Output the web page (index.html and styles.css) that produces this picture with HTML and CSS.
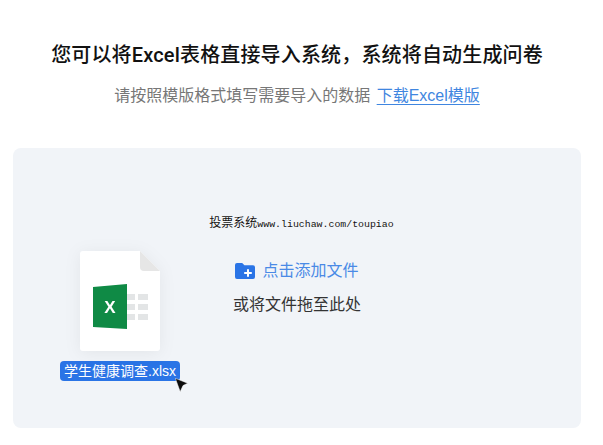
FILE: index.html
```html
<!DOCTYPE html>
<html lang="zh-CN">

<head>
    <meta charset="UTF-8" />
    <title>Excel导入</title>
    <link rel="stylesheet" href="styles.css">
</head>

<body>
    <div class="page">
        <h1 class="title">您可以将Excel表格直接导入系统，系统将自动生成问卷</h1>
        <p class="subtitle">请按照模版格式填写需要导入的数据 <a class="link" href="#">下载Excel模版</a></p>

        <div class="drop-panel">
            <div class="watermark">投票系统<span class="watermark-url">www.liuchaw.com/toupiao</span></div>
            <div class="add-file">
                <svg class="folder-icon" width="20" height="16" viewBox="0 0 20 16">
                    <path d="M2 0h5.2l2.2 2.2H18a2 2 0 0 1 2 2V14a2 2 0 0 1-2 2H2a2 2 0 0 1-2-2V2a2 2 0 0 1 2-2z" fill="#2a74e6" />
                    <path d="M13 6.2v7.6M9.2 10h7.6" stroke="#fff" stroke-width="2" />
                </svg>
                <span>点击添加文件</span>
            </div>
            <div class="drop-hint">或将文件拖至此处</div>

            <!-- file being dragged over the panel -->
            <div class="drag-file">
                <svg class="file-card" width="80" height="100" viewBox="0 0 80 100">
                    <path d="M3 0h57l20 20v77a3 3 0 0 1-3 3H3a3 3 0 0 1-3-3V3a3 3 0 0 1 3-3z" fill="#fff" />
                    <path d="M60 0l20 20H64a4 4 0 0 1-4-4z" fill="#e6e6e6" />
                    <path d="M13 36l34-3v45l-34-2z" fill="#0f8a45" />
                    <path d="M47 43h8v6h-8zM58 43h10v6H58zM47 53h8v6h-8zM58 53h10v6H58zM47 63h8v6h-8zM58 63h10v6H58z" fill="#e3e5e6" />
                    <text x="30" y="62" class="excel-x">X</text>
                </svg>
                <div class="file-name">学生健康调查.xlsx</div>
                <svg class="cursor" width="13" height="14" viewBox="0 0 13 14">
                    <path d="M0.3 0.3L12.7 5.2 8 7.6 5.2 13.7z" fill="#0c0c0c" stroke="#fff" stroke-width="0.5" />
                </svg>
            </div>
        </div>
    </div>
</body>

</html>
```

FILE: styles.css
```css
* {
    box-sizing: border-box;
    font-family: "Liberation Sans", "Noto Sans CJK SC", sans-serif;
}

body {
    margin: 0;
    background: #fff;
    color: #333;
}

.page {
    width: 594px;
    padding: 41px 13px 0;
}

.title {
    margin: 0;
    font-family: Roboto, "Noto Sans CJK SC", sans-serif;
    font-size: 20px;
    line-height: 28px;
    font-weight: 500;
    letter-spacing: 0.16px;
    text-align: center;
    color: #111;
}

.subtitle {
    margin: 14px 0 0;
    font-size: 16px;
    line-height: 26px;
    text-align: center;
    color: #777;
}

.link {
    margin-left: 2px;
    color: #3f86e0;
    text-underline-offset: 3px;
}

.drop-panel {
    position: relative;
    height: 280px;
    margin-top: 39px;
    padding-top: 67px;
    border-radius: 8px;
    background: #f1f4f8;
    display: flex;
    flex-direction: column;
    align-items: center;
}

.watermark {
    height: 16px;
    margin-left: 9px;
    font-size: 12px;
    line-height: 16px;
    color: #111;
    text-shadow: 0 0 1px #fff;
    white-space: nowrap;
}

.watermark-url {
    font-family: "Liberation Mono", monospace;
    font-size: 9.9px;
}

.add-file {
    display: flex;
    align-items: center;
    gap: 7px;
    margin-top: 28px;
    font-size: 16px;
    line-height: 24px;
    color: #4a8ae6;
}

.drop-hint {
    margin-top: 10px;
    font-size: 16px;
    line-height: 24px;
    color: #333;
}

.drag-file {
    position: absolute;
    left: 47px;
    top: 103px;
    width: 120px;
    display: flex;
    flex-direction: column;
    align-items: center;
}

.file-card {
    display: block;
    filter: drop-shadow(0 2px 8px rgba(0, 0, 0, 0.06));
}

.excel-x {
    font-family: "Liberation Sans", sans-serif;
    font-size: 17px;
    font-weight: 700;
    fill: #fff;
    text-anchor: middle;
}

.file-name {
    margin-top: 10px;
    width: 120px;
    height: 20px;
    border-radius: 4px;
    background: #2a74e6;
    color: #fff;
    font-size: 14px;
    line-height: 20px;
    text-align: center;
    white-space: nowrap;
}

.cursor {
    position: absolute;
    left: 115px;
    top: 127px;
}
```
